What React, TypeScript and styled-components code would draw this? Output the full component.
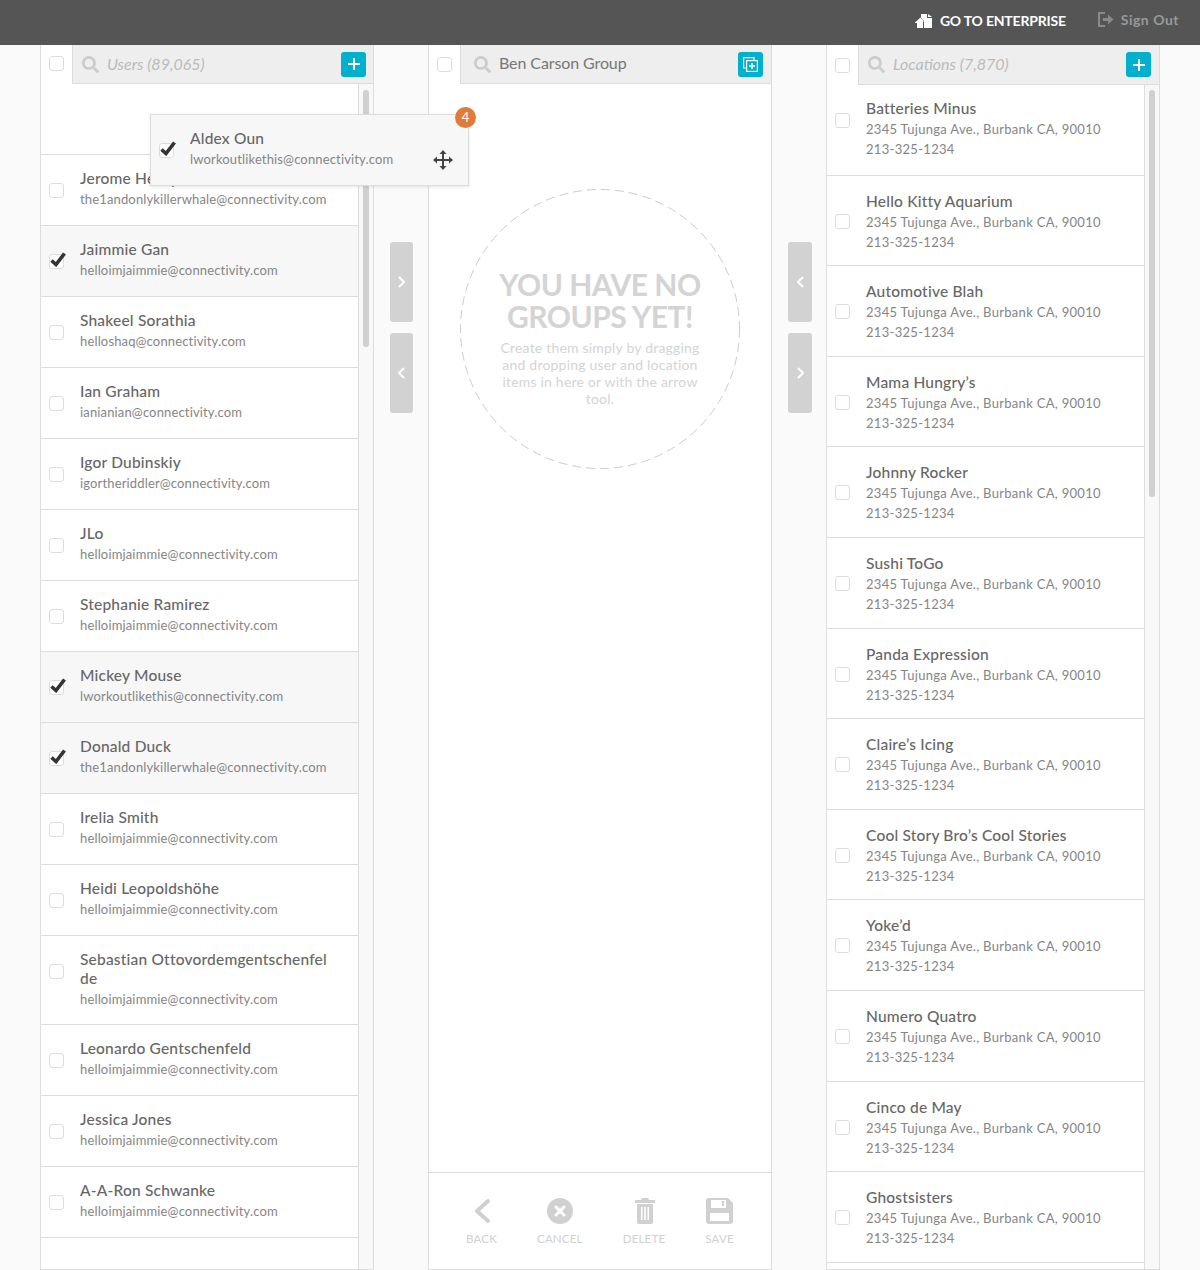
import React from "react";
import styled, { createGlobalStyle } from "styled-components";
import { FaSearch } from "react-icons/fa";

const GlobalStyle = createGlobalStyle`
  html, body {
    margin: 0;
    padding: 0;
    background: #fafafa;
    font-family: "Lato", "Liberation Sans", sans-serif;
    color: #666;
  }
  * {
    box-sizing: border-box;
  }
`;

const Page = styled.div`
  width: 1200px;
  height: 1270px;
  overflow: hidden;
  position: relative;
`;

const TopBar = styled.header`
  height: 45px;
  background: #555;
  display: flex;
  align-items: center;
  justify-content: flex-end;
  padding: 0 21px 4px 0;
`;

const EnterpriseLink = styled.a`
  display: flex;
  align-items: center;
  gap: 8px;
  color: #fff;
  font-size: 14px;
  font-weight: 700;
  letter-spacing: -0.2px;
  margin-right: 32px;
`;

const SignOutLink = styled.a`
  display: flex;
  align-items: center;
  gap: 7px;
  color: #999;
  font-size: 14px;
  font-weight: 700;
  letter-spacing: 0.5px;
  margin-bottom: 2px;
`;

const Columns = styled.main`
  display: flex;
  padding: 0 40px;
  height: 1225px;
`;

const Panel = styled.section<{ $width: number }>`
  position: relative;
  width: ${(p) => p.$width}px;
  flex: none;
  background: #f8f8f8;
  border: 1px solid #ddd;
  border-top: 0;
  display: flex;
  flex-direction: column;
`;

const PanelHeader = styled.div<{ $height: number }>`
  display: flex;
  flex: none;
  height: ${(p) => p.$height}px;
`;

const CheckCell = styled.div<{ $lift?: number }>`
  width: 31px;
  flex: none;
  display: flex;
  align-items: center;
  padding: 0 0 ${(p) => p.$lift ?? 0}px 8px;
  background: #fff;
`;

const SearchBar = styled.div<{ $left: number; $right: number }>`
  flex: 1;
  display: flex;
  align-items: center;
  gap: 8px;
  background: #eee;
  border-left: 1px solid #ddd;
  border-bottom: 1px solid #ddd;
  padding: 0 ${(p) => p.$right}px 0 ${(p) => p.$left}px;
  color: #ccc;
  font-size: 16px;
`;

const SearchText = styled.span<{ $filled?: boolean }>`
  flex: 1;
  padding-bottom: ${(p) => (p.$filled ? 4 : 2)}px;
  font-style: ${(p) => (p.$filled ? "normal" : "italic")};
  letter-spacing: ${(p) => (p.$filled ? -0.1 : 0)}px;
  color: ${(p) => (p.$filled ? "#777" : "#bbb")};
`;

const AddButton = styled.button`
  width: 25px;
  height: 25px;
  padding: 0;
  border: 0;
  border-radius: 3px;
  background: #00b0cc;
  color: #fff;
  display: flex;
  align-items: center;
  justify-content: center;
`;

const Box = styled.span`
  position: relative;
  display: block;
  flex: none;
  width: 15px;
  height: 15px;
  background: #fff;
  border: 1px solid #ddd;
  border-radius: 3px;
  svg {
    position: absolute;
    left: 0;
    top: -3px;
  }
`;

const RowBox = styled.div`
  flex: none;
  margin-top: 15px;
`;

const List = styled.div`
  flex: 1;
  overflow: hidden;
  margin-right: 14px;
  background: #fff;
  border-right: 1px solid #ddd;
`;

const UserRow = styled.div<{ $checked?: boolean; $tall?: boolean }>`
  height: ${(p) => (p.$tall ? 89 : 71)}px;
  display: flex;
  align-items: flex-start;
  gap: 16px;
  padding: 13px 25px 0 8px;
  border-bottom: 1px solid #ddd;
  background: ${(p) => (p.$checked ? "#f7f7f7" : "#fff")};
`;

const BlankRow = styled.div`
  height: 71px;
  border-bottom: 1px solid #ddd;
`;

const LocationRow = styled.div`
  height: 90.6px;
  display: flex;
  align-items: flex-start;
  gap: 16px;
  padding: 15px 20px 0 8px;
  border-bottom: 1px solid #ddd;
  ${RowBox} {
    margin-top: 23px;
  }
  &:first-child {
    padding-top: 13px;
    ${RowBox} {
      margin-top: 15px;
    }
  }
`;

const RowText = styled.div`
  min-width: 0;
`;

const Name = styled.div`
  font-size: 15.5px;
  font-weight: 500;
  line-height: 19px;
  letter-spacing: 0.2px;
  margin: 1px 0;
  word-break: break-all;
  color: #666;
`;

const Detail = styled.div<{ $spacing: number }>`
  font-size: 13px;
  line-height: 20px;
  letter-spacing: ${(p) => p.$spacing}px;
  color: #858585;
`;

const Thumb = styled.div<{ $height: number }>`
  position: absolute;
  top: 45px;
  right: 4px;
  width: 6px;
  height: ${(p) => p.$height}px;
  border-radius: 3px;
  background: #d0d0d0;
`;

const Gutter = styled.div<{ $right: number }>`
  width: 54px;
  flex: none;
  padding: 197px ${(p) => p.$right}px 0 16px;
  display: flex;
  flex-direction: column;
  gap: 11px;
`;

const ArrowButton = styled.button`
  width: 100%;
  height: 80px;
  padding: 0;
  border: 0;
  border-radius: 3px;
  background: #d2d2d2;
  display: flex;
  align-items: center;
  justify-content: center;
`;

const GroupBody = styled.div`
  flex: 1;
  padding: 105px 31px 0;
  background: #fff;
`;

const Circle = styled.div`
  position: relative;
  width: 280px;
  height: 280px;
  display: flex;
  flex-direction: column;
  align-items: center;
  padding: 79px 30px 0;
  text-align: center;
  svg {
    position: absolute;
    inset: 0;
  }
`;

const EmptyTitle = styled.h2`
  margin: 0;
  font-size: 30px;
  line-height: 32px;
  font-weight: 700;
  letter-spacing: -0.5px;
  color: #d4d4d4;
`;

const EmptyText = styled.p`
  width: 205px;
  margin: 7px 0 0;
  font-size: 14px;
  line-height: 17px;
  letter-spacing: 0.2px;
  color: #d4d4d4;
`;

const Footer = styled.footer`
  flex: none;
  height: 97px;
  background: #fff;
  border-top: 1px solid #ddd;
  display: flex;
  gap: 40px;
  padding-left: 37px;
`;

const FooterAction = styled.div`
  display: flex;
  flex-direction: column;
  align-items: center;
  padding-top: 25px;
  gap: 8px;
  font-size: 11.5px;
  letter-spacing: 0.2px;
  color: #d0d0d0;
`;

const DragCard = styled.div`
  position: absolute;
  left: 150px;
  top: 114px;
  width: 319px;
  height: 72px;
  display: flex;
  align-items: flex-start;
  gap: 16px;
  padding: 13px 0 0 8px;
  background: #f7f7f7;
  border: 1px solid #ddd;
  box-shadow: 0 1px 3px rgba(0, 0, 0, 0.1);
`;

const CountBadge = styled.span`
  position: absolute;
  top: -8px;
  right: -8px;
  width: 21px;
  height: 21px;
  border-radius: 50%;
  background: #e07b39;
  color: #fff;
  font-size: 13px;
  line-height: 21px;
  text-align: center;
`;

const MoveHandle = styled.span`
  position: absolute;
  right: 15px;
  top: 35px;
  display: flex;
`;

const users = [
  { name: "Jerome Henry", email: "the1andonlykillerwhale@connectivity.com" },
  { name: "Jaimmie Gan", email: "helloimjaimmie@connectivity.com", checked: true },
  { name: "Shakeel Sorathia", email: "helloshaq@connectivity.com" },
  { name: "Ian Graham", email: "ianianian@connectivity.com" },
  { name: "Igor Dubinskiy", email: "igortheriddler@connectivity.com" },
  { name: "JLo", email: "helloimjaimmie@connectivity.com" },
  { name: "Stephanie Ramirez", email: "helloimjaimmie@connectivity.com" },
  { name: "Mickey Mouse", email: "lworkoutlikethis@connectivity.com", checked: true },
  { name: "Donald Duck", email: "the1andonlykillerwhale@connectivity.com", checked: true },
  { name: "Irelia Smith", email: "helloimjaimmie@connectivity.com" },
  { name: "Heidi Leopoldshöhe", email: "helloimjaimmie@connectivity.com" },
  { name: "Sebastian Ottovordemgentschenfelde", email: "helloimjaimmie@connectivity.com", tall: true },
  { name: "Leonardo Gentschenfeld", email: "helloimjaimmie@connectivity.com" },
  { name: "Jessica Jones", email: "helloimjaimmie@connectivity.com" },
  { name: "A-A-Ron Schwanke", email: "helloimjaimmie@connectivity.com" },
];

const locations = [
  "Batteries Minus",
  "Hello Kitty Aquarium",
  "Automotive Blah",
  "Mama Hungry’s",
  "Johnny Rocker",
  "Sushi ToGo",
  "Panda Expression",
  "Claire’s Icing",
  "Cool Story Bro’s Cool Stories",
  "Yoke’d",
  "Numero Quatro",
  "Cinco de May",
  "Ghostsisters",
];

const Check = ({ checked }: { checked?: boolean }) => (
  <Box>
    {checked && (
      <svg width="16" height="15" viewBox="0 0 16 15" fill="none" stroke="#333" strokeWidth="3.600">
        <path d="M1.500 8.500 6 12.500 14.500 1.500" />
      </svg>
    )}
  </Box>
);

const PlusIcon = () => (
  <svg width="12" height="12" viewBox="0 0 12 12" stroke="#fff" strokeWidth="2">
    <path d="M6 0v12M0 6h12" />
  </svg>
);

const Chevron = ({ dir }: { dir: "left" | "right" }) => (
  <svg width="7" height="12" viewBox="0 0 7 12" fill="none" stroke="#fff" strokeWidth="2">
    <path d={dir === "right" ? "M1 1l5 5-5 5" : "M6 1 1 6l5 5"} />
  </svg>
);

const App = () => (
  <Page>
    <GlobalStyle />
    <TopBar>
      <EnterpriseLink>
        <svg width="17" height="14" viewBox="0 0 17 14" fill="#fff">
          <path d="M0 8.500 5.500 3.500 9 7v.500H8V14H2V9H0z" />
          <path d="M6 0h6v4h5v10H9V6.500L6 3.500z" />
          <path d="M13 0l4 3h-4z" />
        </svg>
        GO TO ENTERPRISE
      </EnterpriseLink>
      <SignOutLink>
        <svg width="16" height="15" viewBox="0 0 16 15" fill="none">
          <path d="M7 1H1v13h6" stroke="#8a8a8a" strokeWidth="2" />
          <path d="M5 6h5V2.500l5.500 5-5.500 5V9H5z" fill="#8a8a8a" />
        </svg>
        Sign Out
      </SignOutLink>
    </TopBar>
    <Columns>
      <Panel $width={334}>
        <PanelHeader $height={39}>
          <CheckCell $lift={2}>
            <Check />
          </CheckCell>
          <SearchBar $left={9} $right={7}>
            <FaSearch size={17} />
            <SearchText>Users (89,065)</SearchText>
            <AddButton>
              <PlusIcon />
            </AddButton>
          </SearchBar>
        </PanelHeader>
        <List>
          <BlankRow />
          {users.map((u) => (
            <UserRow key={u.name} $checked={u.checked} $tall={u.tall}>
              <RowBox>
                <Check checked={u.checked} />
              </RowBox>
              <RowText>
                <Name>{u.name}</Name>
                <Detail $spacing={0.15}>{u.email}</Detail>
              </RowText>
            </UserRow>
          ))}
        </List>
        <Thumb $height={257} />
      </Panel>
      <Gutter $right={15}>
        <ArrowButton>
          <Chevron dir="right" />
        </ArrowButton>
        <ArrowButton>
          <Chevron dir="left" />
        </ArrowButton>
      </Gutter>
      <Panel $width={344}>
        <PanelHeader $height={39}>
          <CheckCell>
            <Check />
          </CheckCell>
          <SearchBar $left={13} $right={8}>
            <FaSearch size={17} />
            <SearchText $filled>Ben Carson Group</SearchText>
            <AddButton>
              <svg width="15" height="15" viewBox="0 0 15 15" fill="none" stroke="#fff" strokeWidth="1.2">
                <path d="M11 3.500V.600H.600V11h2.900" />
                <rect x="3.600" y="3.600" width="10.800" height="10.800" />
                <path d="M9 6v6M6 9h6" strokeWidth="1.500" />
              </svg>
            </AddButton>
          </SearchBar>
        </PanelHeader>
        <GroupBody>
          <Circle>
            <svg width="280" height="280" viewBox="0 0 280 280">
              <circle cx="140" cy="140" r="139.5" fill="none" stroke="#ccc" strokeDasharray="9 5" />
            </svg>
            <EmptyTitle>YOU HAVE NO GROUPS YET!</EmptyTitle>
            <EmptyText>Create them simply by dragging and dropping user and location items in here or with the arrow tool.</EmptyText>
          </Circle>
        </GroupBody>
        <Footer>
          <FooterAction>
            <svg width="18" height="26" viewBox="0 0 18 26" fill="none" stroke="#d0d0d0" strokeWidth="4" strokeLinecap="round" strokeLinejoin="round">
              <path d="M15 3 4 13l11 10" />
            </svg>
            BACK
          </FooterAction>
          <FooterAction>
            <svg width="26" height="26" viewBox="0 0 26 26">
              <circle cx="13" cy="13" r="13" fill="#d0d0d0" />
              <path d="m9 9 8 8m0-8-8 8" stroke="#fff" strokeWidth="3" strokeLinecap="round" />
            </svg>
            CANCEL
          </FooterAction>
          <FooterAction>
            <svg width="24" height="26" viewBox="-2 0 24 26" fill="#d0d0d0">
              <path d="M8 0h6l1 2h6v3H1V2h6z" />
              <path d="M3 6h16v18a2 2 0 0 1-2 2H5a2 2 0 0 1-2-2zm4 3v13h1.500V9zm3.200 0v13h1.600V9zm3.300 0v13H15V9z" fillRule="evenodd" />
            </svg>
            DELETE
          </FooterAction>
          <FooterAction>
            <svg width="27" height="26" viewBox="0 0 27 26" fill="#d0d0d0">
              <path fillRule="evenodd" d="M3 0h19l5 5v18a3 3 0 0 1-3 3H3a3 3 0 0 1-3-3V3a3 3 0 0 1 3-3zm2 2v8h15V2zm11 1v5h2V3zM4 15v8h19v-8z" />
            </svg>
            SAVE
          </FooterAction>
        </Footer>
      </Panel>
      <Gutter $right={14}>
        <ArrowButton>
          <Chevron dir="left" />
        </ArrowButton>
        <ArrowButton>
          <Chevron dir="right" />
        </ArrowButton>
      </Gutter>
      <Panel $width={334}>
        <PanelHeader $height={40}>
          <CheckCell>
            <Check />
          </CheckCell>
          <SearchBar $left={9} $right={8}>
            <FaSearch size={17} />
            <SearchText>Locations (7,870)</SearchText>
            <AddButton>
              <PlusIcon />
            </AddButton>
          </SearchBar>
        </PanelHeader>
        <List>
          {locations.map((name) => (
            <LocationRow key={name}>
              <RowBox>
                <Check />
              </RowBox>
              <RowText>
                <Name>{name}</Name>
                <Detail $spacing={0.3}>2345 Tujunga Ave., Burbank CA, 90010</Detail>
                <Detail $spacing={0.3}>213-325-1234</Detail>
              </RowText>
            </LocationRow>
          ))}
        </List>
        <Thumb $height={407} />
      </Panel>
    </Columns>
    <DragCard>
      <RowBox>
        <Check checked />
      </RowBox>
      <RowText>
        <Name>Aldex Oun</Name>
        <Detail $spacing={0.15}>lworkoutlikethis@connectivity.com</Detail>
      </RowText>
      <CountBadge>4</CountBadge>
      <MoveHandle>
        <svg width="20" height="20" viewBox="0 0 20 20" fill="#444">
          <path d="M10 0l3.500 4H11v5h5V6.500l4 3.500-4 3.500V11h-5v5h2.500L10 20l-3.500-4H9v-5H4v2.500L0 10l4-3.500V9h5V4H6.500z" />
        </svg>
      </MoveHandle>
    </DragCard>
  </Page>
);

export default App;
